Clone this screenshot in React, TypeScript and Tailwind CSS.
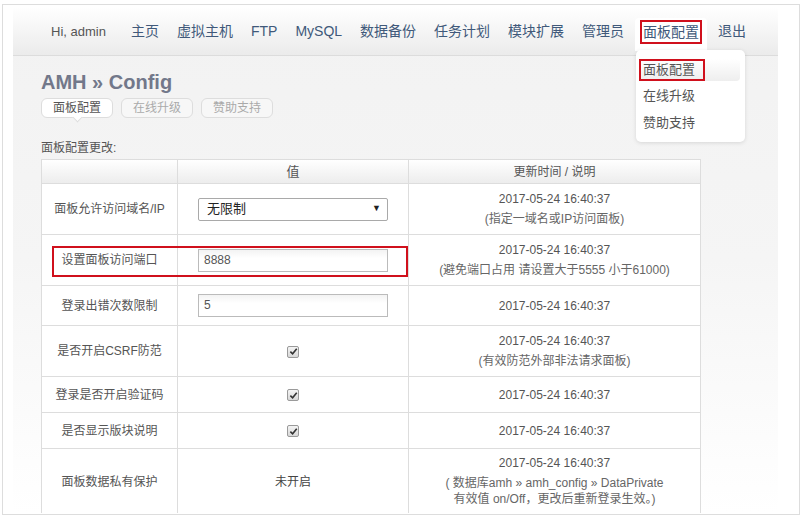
import React from 'react';

const navItems = ['主页', '虚拟主机', 'FTP', 'MySQL', '数据备份', '任务计划', '模块扩展', '管理员'];

const font = { fontFamily: '"Liberation Sans", "Noto Sans CJK SC", Arial, sans-serif' };

const Check: React.FC = () => (
    <span className="inline-flex w-[12px] h-[12px] items-center justify-center border border-[#9a9a9a] rounded-[2px] bg-gradient-to-b from-[#f4f4f4] to-[#d8d8d8] align-middle">
        <svg viewBox="0 0 10 10" className="w-[9px] h-[9px]">
            <path d="M1.5 5.2 L4 7.6 L8.6 2" fill="none" stroke="#333" strokeWidth="1.8" />
        </svg>
    </span>
);

const TextBox: React.FC<{ value: string }> = ({ value }) => (
    <div className="w-[190px] h-[23px] border border-[#bbb] bg-gradient-to-b from-[#f3f3f3] to-white to-40% px-[5px] text-[12px] leading-[21px] text-[#555] text-left">
        {value}
    </div>
);

interface Row {
    label: string;
    value: React.ReactNode;
    field?: boolean;
    notes?: string[];
    h: string;
    tight?: boolean;
    boxed?: boolean;
}

const rows: Row[] = [
    {
        label: '面板允许访问域名/IP',
        value: (
            <div className="w-[190px] h-[23px] border border-[#a9a9a9] rounded-[2px] bg-white flex items-center justify-between pl-[8px] pr-[6px] text-[13px] text-[#222]">
                <span>无限制</span>
                <span className="text-[9px] text-[#222]">▼</span>
            </div>
        ),
        field: true,
        notes: ['(指定一域名或IP访问面板)'],
        h: 'h-[51px]',
    },
    { label: '设置面板访问端口', value: <TextBox value="8888" />, field: true, notes: ['(避免端口占用 请设置大于5555 小于61000)'], h: 'h-[51px]', boxed: true },
    { label: '登录出错次数限制', value: <TextBox value="5" />, field: true, h: 'h-[40px]' },
    { label: '是否开启CSRF防范', value: <Check />, notes: ['(有效防范外部非法请求面板)'], h: 'h-[51px]' },
    { label: '登录是否开启验证码', value: <Check />, h: 'h-[36px]' },
    { label: '是否显示版块说明', value: <Check />, h: 'h-[36px]' },
    {
        label: '面板数据私有保护',
        value: <span className="text-[12px] text-[#444]">未开启</span>,
        notes: ['( 数据库amh » amh_config » DataPrivate', '有效值 on/Off，更改后重新登录生效。)'],
        h: 'h-[66px]',
        tight: true,
    },
];

const App: React.FC = () => {
    return (
        <div className="relative w-[800px] h-[526px] bg-white overflow-hidden" style={font}>
            <div className="ml-[2px] mt-[4px] w-[798px] h-[511px] border border-[#ddd] pl-[10px] pr-[21px] pt-[2px]">
                <div className="h-[506px] overflow-hidden bg-gradient-to-b from-[#f2f2f2] via-[#f5f5f5] to-white">
                    {/* nav */}
                    <div className="h-[49px] pt-[1px] border-b border-[#dcdcdc] bg-gradient-to-b from-white to-[#ebebeb] flex items-center">
                        <span className="ml-[38px] text-[13px] text-[#555]">Hi, admin</span>
                        <div className="ml-[25px] flex items-center gap-[18px] text-[14px] text-[#40597a]">
                            {navItems.map((n) => (
                                <span key={n}>{n}</span>
                            ))}
                            <span className="relative -mx-[2px]">
                                <span className="absolute -left-[5px] -right-[5px] -top-[2px] h-[33px] bg-white rounded-t-[4px]"></span>
                                <span className="relative block border-2 border-[#d0101c] px-[1px] h-[24px] leading-[20px]">面板配置</span>
                            </span>
                            <span>退出</span>
                        </div>
                    </div>

                    {/* content */}
                    <div className="pl-[28px]">
                        <h1 className="mt-[14px] text-[20px] leading-[24px] font-bold text-[#72788a]">AMH » Config</h1>
                        <div className="mt-[4px] flex gap-[8px] text-[12px]">
                            <span className="relative w-[72px] h-[20px] rounded-[6px] border border-[#ddd] bg-white flex items-center justify-center text-[#555]">
                                面板配置
                                <span className="absolute left-[32px] -bottom-[4px] w-[7px] h-[7px] bg-white border-r border-b border-[#ddd] rotate-45"></span>
                            </span>
                            <span className="w-[72px] h-[20px] rounded-[6px] border border-[#ddd] bg-[#f7f7f7] flex items-center justify-center text-[#aaa]">在线升级</span>
                            <span className="w-[72px] h-[20px] rounded-[6px] border border-[#ddd] bg-[#f7f7f7] flex items-center justify-center text-[#aaa]">赞助支持</span>
                        </div>
                        <p className="mt-[22px] text-[12px] leading-[16px] text-[#555]">面板配置更改:</p>
                        <table className="mt-[3px] w-[659px] table-fixed border-collapse text-[12px] text-[#555]">
                            <colgroup>
                                <col className="w-[136px]" />
                                <col className="w-[231px]" />
                                <col className="w-[292px]" />
                            </colgroup>
                            <thead>
                                <tr className="h-[24px] bg-gradient-to-b from-white to-[#ececec]">
                                    <th className="border border-[#ddd] font-normal"></th>
                                    <th className="border border-[#ddd] font-normal text-[13px]">值</th>
                                    <th className="border border-[#ddd] font-normal">更新时间 / 说明</th>
                                </tr>
                            </thead>
                            <tbody className="bg-white">
                                {rows.map((r) => (
                                    <tr key={r.label} className={r.h}>
                                        <td className="relative border border-[#ddd] text-center">
                                            {r.boxed && (
                                                <span className="absolute left-[10px] top-[11px] w-[356px] h-[31px] border-2 border-[#d0101c] pointer-events-none"></span>
                                            )}
                                            {r.label}
                                        </td>
                                        <td className="border border-[#ddd] text-center">
                                            {r.field ? <div className="pl-[20px]">{r.value}</div> : r.value}
                                        </td>
                                        <td className={`border border-[#ddd] text-center ${r.tight ? 'pb-[4px]' : ''}`}>
                                            <div className="leading-[20px]">2017-05-24 16:40:37</div>
                                            {r.notes && (
                                                <div className={r.tight ? 'leading-[16px] mt-[2px] text-[#666]' : 'leading-[20px] text-[#666]'}>
                                                    {r.notes.map((n) => (
                                                        <div key={n}>{n}</div>
                                                    ))}
                                                </div>
                                            )}
                                        </td>
                                    </tr>
                                ))}
                            </tbody>
                        </table>
                    </div>
                </div>
            </div>

            {/* dropdown */}
            <div className="absolute left-[636px] top-[50px] w-[109px] h-[92px] bg-white rounded-[5px] shadow-[0_1px_4px_rgba(0,0,0,0.12)] text-[13px] text-[#555] pt-[9px] pl-[3px]">
                <div className="relative h-[22px] w-[101px] rounded-[4px] bg-gradient-to-b from-white to-[#eeeeee]">
                    <span className="absolute left-0 top-0 h-[22px] w-[66px] border-2 border-[#d0101c] pl-[2px] leading-[18px]">面板配置</span>
                </div>
                <div className="mt-[4px] pl-[4px] leading-[22px]">在线升级</div>
                <div className="mt-[5px] pl-[4px] leading-[22px]">赞助支持</div>
            </div>
        </div>
    );
};

export default App;
